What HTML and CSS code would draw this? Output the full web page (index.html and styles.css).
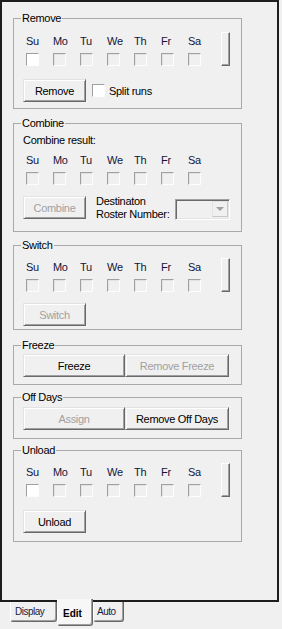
FILE: index.html
```html
<!DOCTYPE html>
<html lang="en">
<head>
  <meta charset="UTF-8">
  <meta name="viewport" content="width=device-width, initial-scale=1.0">
  <title>Roster Edit</title>
  <link rel="stylesheet" href="styles.css">
</head>
<body>
  <div class="panel">

    <fieldset class="group group-remove">
      <legend>Remove</legend>
      <div class="days-row">
        <div class="days">
          <div class="day"><span class="day-name">Su</span><span class="check check-on"></span></div>
          <div class="day"><span class="day-name">Mo</span><span class="check"></span></div>
          <div class="day"><span class="day-name">Tu</span><span class="check"></span></div>
          <div class="day"><span class="day-name">We</span><span class="check"></span></div>
          <div class="day"><span class="day-name">Th</span><span class="check"></span></div>
          <div class="day"><span class="day-name">Fr</span><span class="check"></span></div>
          <div class="day"><span class="day-name">Sa</span><span class="check"></span></div>
        </div>
        <span class="slider"></span>
      </div>
      <div class="actions">
        <button class="btn">Remove</button>
        <label class="option"><span class="check check-on"></span>Split runs</label>
      </div>
    </fieldset>

    <fieldset class="group group-combine">
      <legend>Combine</legend>
      <div class="note">Combine result:</div>
      <div class="days-row">
        <div class="days">
          <div class="day"><span class="day-name">Su</span><span class="check"></span></div>
          <div class="day"><span class="day-name">Mo</span><span class="check"></span></div>
          <div class="day"><span class="day-name">Tu</span><span class="check"></span></div>
          <div class="day"><span class="day-name">We</span><span class="check"></span></div>
          <div class="day"><span class="day-name">Th</span><span class="check"></span></div>
          <div class="day"><span class="day-name">Fr</span><span class="check"></span></div>
          <div class="day"><span class="day-name">Sa</span><span class="check"></span></div>
        </div>
      </div>
      <div class="actions actions-combine">
        <button class="btn" disabled>Combine</button>
        <div class="dest-label">Destinaton<br>Roster Number:</div>
        <div class="combo"><span class="combo-arrow"></span></div>
      </div>
    </fieldset>

    <fieldset class="group group-switch">
      <legend>Switch</legend>
      <div class="days-row">
        <div class="days">
          <div class="day"><span class="day-name">Su</span><span class="check"></span></div>
          <div class="day"><span class="day-name">Mo</span><span class="check"></span></div>
          <div class="day"><span class="day-name">Tu</span><span class="check"></span></div>
          <div class="day"><span class="day-name">We</span><span class="check"></span></div>
          <div class="day"><span class="day-name">Th</span><span class="check"></span></div>
          <div class="day"><span class="day-name">Fr</span><span class="check"></span></div>
          <div class="day"><span class="day-name">Sa</span><span class="check"></span></div>
        </div>
        <span class="slider"></span>
      </div>
      <div class="actions">
        <button class="btn" disabled>Switch</button>
      </div>
    </fieldset>

    <fieldset class="group group-freeze">
      <legend>Freeze</legend>
      <div class="btn-pair">
        <button class="btn btn-left">Freeze</button>
        <button class="btn btn-right" disabled>Remove Freeze</button>
      </div>
    </fieldset>

    <fieldset class="group group-offdays">
      <legend>Off Days</legend>
      <div class="btn-pair">
        <button class="btn btn-left" disabled>Assign</button>
        <button class="btn btn-right">Remove Off Days</button>
      </div>
    </fieldset>

    <fieldset class="group group-unload">
      <legend>Unload</legend>
      <div class="days-row">
        <div class="days">
          <div class="day"><span class="day-name">Su</span><span class="check check-on"></span></div>
          <div class="day"><span class="day-name">Mo</span><span class="check"></span></div>
          <div class="day"><span class="day-name">Tu</span><span class="check"></span></div>
          <div class="day"><span class="day-name">We</span><span class="check"></span></div>
          <div class="day"><span class="day-name">Th</span><span class="check"></span></div>
          <div class="day"><span class="day-name">Fr</span><span class="check"></span></div>
          <div class="day"><span class="day-name">Sa</span><span class="check"></span></div>
        </div>
        <span class="slider"></span>
      </div>
      <div class="actions">
        <button class="btn">Unload</button>
      </div>
    </fieldset>

  </div>

  <div class="tabs">
    <div class="tab tab-display">Display</div>
    <div class="tab tab-edit">Edit</div>
    <div class="tab tab-auto">Auto</div>
  </div>
</body>
</html>
```

FILE: styles.css
```css
html, body {
  margin: 0;
  padding: 0;
  background: #f0f0f0;
  font-family: "Liberation Sans", Arial, sans-serif;
  font-size: 11px;
  letter-spacing: -0.3px;
  color: #000;
}

.panel {
  box-sizing: border-box;
  width: 279px;
  height: 602px;
  border: 2px solid #1e1e1e;
  padding: 10px 0 0 11px;
}

/* group boxes */
.group {
  box-sizing: border-box;
  width: 229px;
  margin: 0;
  padding: 0 9px;
  border: 1px solid #a9a9a9;
  min-inline-size: auto;
}

.group legend {
  padding: 0 1px;
  margin-left: -2px;
  line-height: 13px;
}

.group-remove { padding-top: 7px; padding-bottom: 6px; }
.group-combine { margin-top: 8px; padding-top: 4px; padding-bottom: 10px; }
.group-switch { margin-top: 7px; padding-top: 6px; padding-bottom: 3px; }
.group-freeze { margin-top: 9px; padding-top: 2px; padding-bottom: 7px; }
.group-offdays { margin-top: 6px; padding-top: 3px; padding-bottom: 8px; }
.group-unload { margin-top: 5px; padding-top: 6px; padding-bottom: 8px; }

.note {
  line-height: 13px;
  margin-bottom: 7px;
}

/* day checkboxes */
.days-row {
  display: flex;
  align-items: flex-end;
}

.days {
  display: grid;
  grid-template-columns: repeat(7, 27px);
  margin-left: 3px;
}

.day {
  display: flex;
  flex-direction: column;
  align-items: flex-start;
  gap: 5px;
}

.day-name {
  line-height: 13px;
  color: #14143a;
}

.check {
  display: block;
  flex: none;
  width: 13px;
  height: 13px;
  box-sizing: border-box;
  border: 1px solid;
  border-color: #a0a0a0 #fdfdfd #fdfdfd #a0a0a0;
  box-shadow: inset 1px 1px 0 #e3e3e3;
  background: #f0f0f0;
}

.check-on {
  background: #fff;
  box-shadow: none;
}

.slider {
  display: block;
  width: 9px;
  height: 34px;
  box-sizing: border-box;
  margin-left: 6px;
  border: 1px solid;
  border-color: #fff #696969 #696969 #fff;
  box-shadow: inset -1px -1px 0 #a0a0a0;
  background: #f0f0f0;
}

/* buttons */
.actions {
  display: flex;
  align-items: center;
  margin-top: 13px;
}

.group-switch .actions { margin-top: 11px; }

.btn {
  box-sizing: border-box;
  width: 63px;
  height: 23px;
  padding: 0;
  font: inherit;
  letter-spacing: inherit;
  color: #000;
  background: #f0f0f0;
  border: 1px solid;
  border-color: #e3e3e3 #696969 #696969 #e3e3e3;
  box-shadow: inset 1px 1px 0 #fff, inset -1px -1px 0 #a0a0a0;
}

.btn:disabled {
  color: #a0a0a0;
}

.btn-pair {
  display: flex;
}

.btn-left { width: 102px; }
.btn-right { width: 104px; }

.option {
  display: flex;
  align-items: center;
  gap: 4px;
  margin-left: 6px;
}

/* combine row */
.actions-combine {
  align-items: flex-start;
  margin-top: 10px;
}

.actions-combine .btn {
  margin-top: 1px;
}

.dest-label {
  margin-left: 10px;
  line-height: 13px;
}

.combo {
  display: flex;
  justify-content: flex-end;
  box-sizing: border-box;
  width: 55px;
  height: 21px;
  margin: 4px 2px 0 auto;
  padding: 1px;
  border: 1px solid;
  border-color: #a0a0a0 #fff #fff #a0a0a0;
  box-shadow: inset 1px 1px 0 #696969, inset -1px -1px 0 #e3e3e3;
  background: #f0f0f0;
}

.combo-arrow {
  display: flex;
  align-items: center;
  justify-content: center;
  box-sizing: border-box;
  width: 16px;
  height: 16px;
  border: 1px solid;
  border-color: #e3e3e3 #c8c8c8 #c8c8c8 #e3e3e3;
}

.combo-arrow::after {
  content: "";
  border-top: 4px solid #a0a0a0;
  border-left: 4px solid transparent;
  border-right: 4px solid transparent;
}

/* tabs */
.tabs {
  display: flex;
  align-items: flex-start;
  padding-left: 10px;
}

.tab {
  box-sizing: border-box;
  height: 20px;
  padding: 3px 0 0 4px;
  border: 1px solid;
  border-top: 0;
  border-color: #fff #696969 #696969 #fff;
  border-radius: 0 0 3px 3px;
  box-shadow: inset -1px -1px 0 #a0a0a0;
  background: #f0f0f0;
  font-size: 10px;
  letter-spacing: -0.5px;
  line-height: 13px;
  color: #1a1a3c;
}

.tab-display { width: 47px; }

.tab-edit {
  width: 36px;
  height: 27px;
  margin-top: -3px;
  padding: 8px 0 0 5px;
  background: #f7f7f7;
  font-weight: bold;
  letter-spacing: 0;
  color: #000;
}

.tab-auto {
  width: 31px;
  padding-left: 3px;
}
```
